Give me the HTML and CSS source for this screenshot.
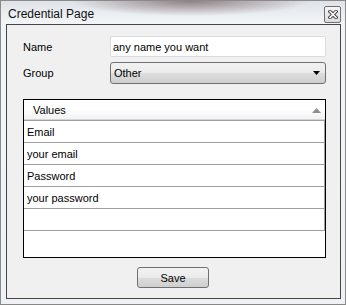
FILE: index.html
```html
<!DOCTYPE html>
<html lang="en">
<head>
    <meta charset="UTF-8">
    <meta name="viewport" content="width=device-width, initial-scale=1.0">
    <title>Credential Page</title>
    <link rel="stylesheet" href="styles.css">
</head>
<body>
    <div class="window">
        <div class="titlebar">
            <span class="title">Credential Page</span>
            <button class="close" aria-label="Close">
                <svg width="10" height="9" viewBox="0 0 10 9">
                    <path d="M2 1.5 L8 7.5 M8 1.5 L2 7.5" stroke="#3a3a3a" stroke-width="3.4" stroke-linecap="square"/>
                    <path d="M2 1.5 L8 7.5 M8 1.5 L2 7.5" stroke="#fff" stroke-width="1.6" stroke-linecap="square"/>
                </svg>
            </button>
        </div>

        <div class="client">
            <div class="field">
                <label>Name</label>
                <div class="textbox">any name you want</div>
            </div>
            <div class="field field-combo">
                <label>Group</label>
                <div class="combo">
                    <span>Other</span>
                    <svg width="7" height="4" viewBox="0 0 7 4"><path d="M0 0 H7 L3.5 4 Z" fill="#000"/></svg>
                </div>
            </div>

            <div class="grid">
                <div class="grid-head">
                    <span>Values</span>
                    <svg width="9" height="5" viewBox="0 0 9 5"><path d="M0 5 H9 L4.5 0 Z" fill="#8e8e8e"/></svg>
                </div>
                <div class="grid-row">Email</div>
                <div class="grid-row">your email</div>
                <div class="grid-row">Password</div>
                <div class="grid-row">your password</div>
                <div class="grid-row"></div>
            </div>

            <div class="actions">
                <button class="btn">Save</button>
            </div>
        </div>
    </div>
</body>
</html>
```

FILE: styles.css
```css
body {
    margin: 0;
    background: #fff;
    font-family: 'Liberation Sans', Arial, sans-serif;
    font-size: 11px;
    color: #000;
}

.window {
    width: 346px;
    height: 305px;
    box-sizing: border-box;
    border: 1px solid #8a8a8a;
    padding: 0 4px 5px 5px;
    display: flex;
    flex-direction: column;
    background:
        radial-gradient(ellipse 120px 15px at 190px 0, rgba(90, 62, 64, 0.6), rgba(90, 62, 64, 0)),
        linear-gradient(#dfe3e8, #f2f5f8 22px, #eef2f6);
}

.titlebar {
    height: 23px;
    display: flex;
    align-items: center;
    justify-content: space-between;
}

.title {
    font-size: 12px;
    padding-left: 2px;
    padding-top: 2px;
    color: #111;
}

.close {
    width: 17px;
    height: 17px;
    margin-top: 4px;
    padding: 0;
    border: 1px solid #6f6f6f;
    border-radius: 2px;
    background: linear-gradient(#f6f6f6, #dcdcdc);
    display: flex;
    align-items: center;
    justify-content: center;
}

.client {
    flex: 1;
    border: 1px solid #454545;
    background: #f0f0f0;
    padding: 11px 14px 10px 16px;
    display: flex;
    flex-direction: column;
}

.field {
    display: flex;
    align-items: center;
}

.field label {
    width: 87px;
}

.field-combo {
    margin-top: 5px;
}

.textbox {
    flex: 1;
    height: 21px;
    box-sizing: border-box;
    border: 1px solid #dadce2;
    border-radius: 2px;
    background: #fff;
    padding-left: 2px;
    display: flex;
    align-items: center;
}

.combo {
    flex: 1;
    height: 22px;
    box-sizing: border-box;
    border: 1px solid #707070;
    border-radius: 3px;
    background: linear-gradient(#f2f2f2, #ebebeb 50%, #dddddd 51%, #cfcfcf);
    padding: 0 5px 0 3px;
    display: flex;
    align-items: center;
    justify-content: space-between;
}

.grid {
    margin-top: 15px;
    height: 159px;
    box-sizing: border-box;
    border: 1px solid #000;
    background: #fff;
}

.grid-head {
    height: 20px;
    box-sizing: border-box;
    border-bottom: 1px solid #d5d5d5;
    background: linear-gradient(#ffffff, #ffffff 45%, #f1f2f4);
    padding: 0 4px 0 9px;
    display: flex;
    align-items: center;
    justify-content: space-between;
}

.grid-head svg {
    margin-top: 2px;
}

.grid-row {
    height: 22px;
    box-sizing: border-box;
    border-top: 1px solid #a0a0a0;
    border-right: 1px solid #a0a0a0;
    padding: 1px 0 0 3px;
    display: flex;
    align-items: center;
}

.grid-row:last-child {
    border-bottom: 1px solid #a0a0a0;
    height: 23px;
}

.actions {
    margin-top: 9px;
    padding-right: 3px;
    display: flex;
    justify-content: center;
}

.btn {
    width: 72px;
    height: 21px;
    border: 1px solid #707070;
    border-radius: 3px;
    background: linear-gradient(#f2f2f2, #ebebeb 50%, #dddddd 51%, #cfcfcf);
    font-family: 'Liberation Sans', Arial, sans-serif;
    font-size: 11px;
    color: #000;
    padding: 0;
}
```
